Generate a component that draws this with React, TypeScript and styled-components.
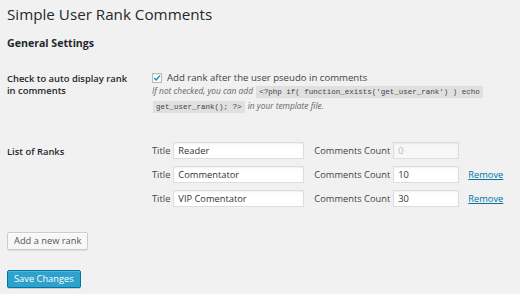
import React from 'react';
import styled, { createGlobalStyle } from 'styled-components';

const GlobalStyle = createGlobalStyle`
  html, body {
    margin: 0;
    padding: 0;
    background: #f1f1f1;
  }
  body {
    font-family: 'Open Sans', 'Liberation Sans', sans-serif;
    color: #444;
  }
`;

const Page = styled.div`
  padding: 2px 7px 0;
  width: 520px;
  height: 294px;
  box-sizing: border-box;
  overflow: hidden;
`;

const Title = styled.h1`
  font-size: 15.2px;
  font-weight: 400;
  color: #23282d;
  margin: 0;
  line-height: 24px;
`;

const Section = styled.h2`
  font-size: 10.6px;
  font-weight: 700;
  color: #23282d;
  margin: 9px 0 0;
  line-height: 16px;
`;

const Row = styled.div<{ $top: number }>`
  display: grid;
  grid-template-columns: 145px 1fr;
  margin-top: ${(p) => p.$top}px;
`;

const Label = styled.div<{ $line?: number }>`
  font-size: 9.4px;
  font-weight: 600;
  color: #23282d;
  line-height: ${(p) => p.$line ?? 12}px;
  padding-top: 1px;
`;

const CheckLine = styled.label`
  display: flex;
  align-items: center;
  gap: 5px;
  font-size: 9.6px;
  line-height: 12px;
  color: #444;
`;

const Box = styled.span`
  width: 8px;
  height: 8px;
  border: 1px solid #b4b9be;
  background: #fff;
  box-shadow: inset 0 1px 2px rgba(0, 0, 0, 0.1);
  display: flex;
  align-items: center;
  justify-content: center;
`;

const Description = styled.p`
  margin: 0;
  font-size: 8.4px;
  font-style: italic;
  line-height: 14px;
  color: #666;
`;

const Code = styled.code`
  font-family: 'Liberation Mono', 'DejaVu Sans Mono', monospace;
  font-style: normal;
  font-size: 7.5px;
  background: rgba(0, 0, 0, 0.07);
  padding: 2px 3px;
  margin: 0 1px;
  color: #444;
`;

const Ranks = styled.div`
  display: flex;
  flex-direction: column;
  gap: 7px;
`;

const RankRow = styled.div`
  display: flex;
  align-items: center;
  height: 17px;
  font-size: 9.3px;
  color: #444;
`;

const FieldLabel = styled.span`
  margin-right: 3px;
`;

const Input = styled.div<{ $w: number; $disabled?: boolean }>`
  width: ${(p) => p.$w}px;
  height: 17px;
  box-sizing: border-box;
  border: 1px solid #ddd;
  box-shadow: inset 0 1px 2px rgba(0, 0, 0, 0.07);
  background: ${(p) => (p.$disabled ? '#f7f7f7' : '#fff')};
  color: ${(p) => (p.$disabled ? '#bbb' : '#333')};
  padding: 0 4px;
  font-size: 9.3px;
  line-height: 15px;
`;

const Gap = styled.span<{ $w: number }>`
  display: inline-block;
  width: ${(p) => p.$w}px;
`;

const RemoveLink = styled.a`
  color: #0074a2;
  text-decoration: underline;
  font-size: 9.3px;
  margin-left: 9px;
`;

const Button = styled.div`
  height: 18px;
  box-sizing: border-box;
  padding: 0 6px;
  font-size: 9.3px;
  line-height: 16px;
  border: 1px solid #ccc;
  border-radius: 2px;
  background: #f7f7f7;
  color: #555;
  box-shadow: inset 0 1px 0 #fff, 0 1px 0 rgba(0, 0, 0, 0.08);
`;

const PrimaryButton = styled(Button)`
  background: #2ea2cc;
  border-color: #0074a2;
  color: #fff;
  box-shadow: inset 0 1px 0 rgba(120, 200, 230, 0.5), 0 1px 0 rgba(0, 0, 0, 0.15);
`;

const ButtonRow = styled.div<{ $top: number }>`
  display: flex;
  margin-top: ${(p) => p.$top}px;
`;

const ranks = [
  { title: 'Reader', count: '0', fixed: true },
  { title: 'Commentator', count: '10', fixed: false },
  { title: 'VIP Comentator', count: '30', fixed: false },
];

export default function App() {
  return (
    <Page>
      <GlobalStyle />
      <Title>Simple User Rank Comments</Title>
      <Section>General Settings</Section>

      <Row $top={21}>
        <Label>
          Check to auto display rank
          <br />
          in comments
        </Label>
        <div>
          <CheckLine>
            <Box>
              <svg width="8" height="8" viewBox="0 0 8 8">
                <path d="M1.2 4 L3.2 6 L6.8 1.6" fill="none" stroke="#1e8cbe" strokeWidth="1.5" />
              </svg>
            </Box>
            Add rank after the user pseudo in comments
          </CheckLine>
          <Description>
            If not checked, you can add <Code>&lt;?php if( function_exists('get_user_rank') ) echo</Code>
            <br />
            <Code>get_user_rank(); ?&gt;</Code> in your template file.
          </Description>
        </div>
      </Row>

      <Row $top={28}>
        <Label $line={17}>List of Ranks</Label>
        <Ranks>
          {ranks.map((r) => (
            <RankRow key={r.title}>
              <FieldLabel>Title</FieldLabel>
              <Input $w={131}>{r.title}</Input>
              <Gap $w={10} />
              <FieldLabel>Comments Count</FieldLabel>
              <Input $w={66} $disabled={r.fixed}>
                {r.count}
              </Input>
              {!r.fixed && <RemoveLink>Remove</RemoveLink>}
            </RankRow>
          ))}
        </Ranks>
      </Row>

      <ButtonRow $top={25}>
        <Button>Add a new rank</Button>
      </ButtonRow>
      <ButtonRow $top={20}>
        <PrimaryButton>Save Changes</PrimaryButton>
      </ButtonRow>
    </Page>
  );
}
